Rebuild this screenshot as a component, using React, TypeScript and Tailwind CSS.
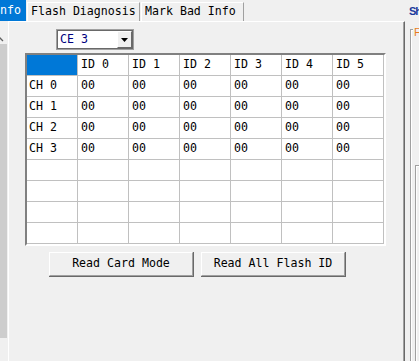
import React from "react";

const cols = ["ID 0", "ID 1", "ID 2", "ID 3", "ID 4", "ID 5"];
const rows = ["CH 0", "CH 1", "CH 2", "CH 3"];

function Cell({ children, first }: { children?: React.ReactNode; first?: boolean }) {
  return (
    <div
      className={`w-[51px] h-[21px] shrink-0 border-r border-b border-[#c0c0c0] flex items-center ${
        first ? "pl-[2px]" : "pl-[3px]"
      }`}
    >
      {children}
    </div>
  );
}

function Tab({ label, width }: { label: string; width: string }) {
  return (
    <div
      className={`${width} h-[19px] mt-[2px] flex items-center pl-[3px] border-t border-l border-white border-r border-r-[#a0a0a0] bg-[#f0f0f0]`}
    >
      {label}
    </div>
  );
}

function Button({ label }: { label: string }) {
  return (
    <div className="w-[145px] h-[25px] border-r border-b border-[#696969]">
      <div className="w-full h-full border-t border-l border-white border-r border-b border-r-[#a0a0a0] border-b-[#a0a0a0] flex items-center justify-center bg-[#f0f0f0]">
        {label}
      </div>
    </div>
  );
}

export default function App() {
  return (
    <div className="w-[419px] h-[361px] bg-[#f0f0f0] overflow-hidden font-['DejaVu_Sans_Mono',monospace] text-[11.6px] text-black leading-none">
      {/* Tab strip */}
      <div className="flex h-[21px]">
        <div className="w-[26px] h-[21px] bg-[#0078d7] text-white flex items-center">nfo</div>
        <div className="w-[1px]" />
        <Tab label="Flash Diagnosis" width="w-[113px]" />
        <div className="w-[1px]" />
        <Tab label="Mark Bad Info" width="w-[103px]" />
        <div className="flex-1" />
        <div className="w-[10px] flex items-center pt-[2px] font-['Liberation_Sans',sans-serif] font-bold text-[11px] tracking-[-1px] text-[#1a3a9c] whitespace-nowrap">
          Sh
        </div>
      </div>

      <div className="flex h-[340px]">
        {/* Left scrollbar sliver */}
        <div className="w-[8px] flex flex-col">
          <div className="h-[23px] w-[7px] flex items-end">
            <svg width="7" height="10" viewBox="0 0 7 10">
              <path d="M-3 7 L0 4 L3 7" fill="none" stroke="#606060" strokeWidth="1.3" />
            </svg>
          </div>
          <div className="w-[7px] h-[294px] bg-[#cdcdcd]" />
        </div>

        {/* Panel */}
        <div className="w-[397px] h-full border-t border-l border-white border-r border-r-[#696969] shadow-[inset_-1px_0_0_#a0a0a0]">
          <div className="flex flex-col">
            {/* Combo */}
            <div className="ml-[47px] mt-[7px] w-[78px] h-[21px] border border-[#a0a0a0]">
              <div className="w-full h-full border border-[#696969] bg-white flex items-center justify-between">
                <span className="pl-[2px] text-[#000080]">CE 3</span>
                <div className="w-[15px] h-[17px] bg-[#f0f0f0] border-t border-l border-white border-r border-b border-r-[#696969] border-b-[#696969] flex items-center justify-center">
                  <svg width="7" height="4" viewBox="0 0 7 4">
                    <path d="M0 0 H7 L3.5 4 Z" fill="#000" />
                  </svg>
                </div>
              </div>
            </div>

            {/* Grid */}
            <div className="ml-[16px] mt-[3px] w-[361px] border-t-2 border-l-2 border-[#808080] border-r-2 border-b-2 border-r-white border-b-white bg-white">
              <div className="flex">
                <div className="w-[51px] h-[21px] shrink-0 border-r border-b border-[#c0c0c0] bg-[#0078d7]" />
                {cols.map((c) => (
                  <Cell key={c}>{c}</Cell>
                ))}
              </div>
              {rows.map((r) => (
                <div key={r} className="flex">
                  <Cell first>{r}</Cell>
                  {cols.map((c) => (
                    <Cell key={c}>00</Cell>
                  ))}
                </div>
              ))}
              {[0, 1, 2, 3].map((i) => (
                <div key={i} className="flex">
                  <Cell first />
                  {cols.map((c) => (
                    <Cell key={c} />
                  ))}
                </div>
              ))}
            </div>

            {/* Buttons */}
            <div className="ml-[40px] mt-[6px] flex gap-[7px]">
              <Button label="Read Card Mode" />
              <Button label="Read All Flash ID" />
            </div>
          </div>
        </div>

        {/* Right side group box */}
        <div className="flex-1 relative">
          <div className="ml-[5px] mt-[8px] h-[340px] border-t border-l border-[#a0a0a0] shadow-[inset_1px_1px_0_#ffffff]">
            <div className="ml-[4px] mt-[135px] h-[200px] border-t border-l border-[#a0a0a0] shadow-[inset_1px_1px_0_#ffffff]" />
          </div>
          <span className="absolute left-[8px] top-[6px] px-[1px] bg-[#f0f0f0] font-['Liberation_Sans',sans-serif] text-[11px] text-[#e87d1e] leading-none">
            Flash
          </span>
        </div>
      </div>
    </div>
  );
}
